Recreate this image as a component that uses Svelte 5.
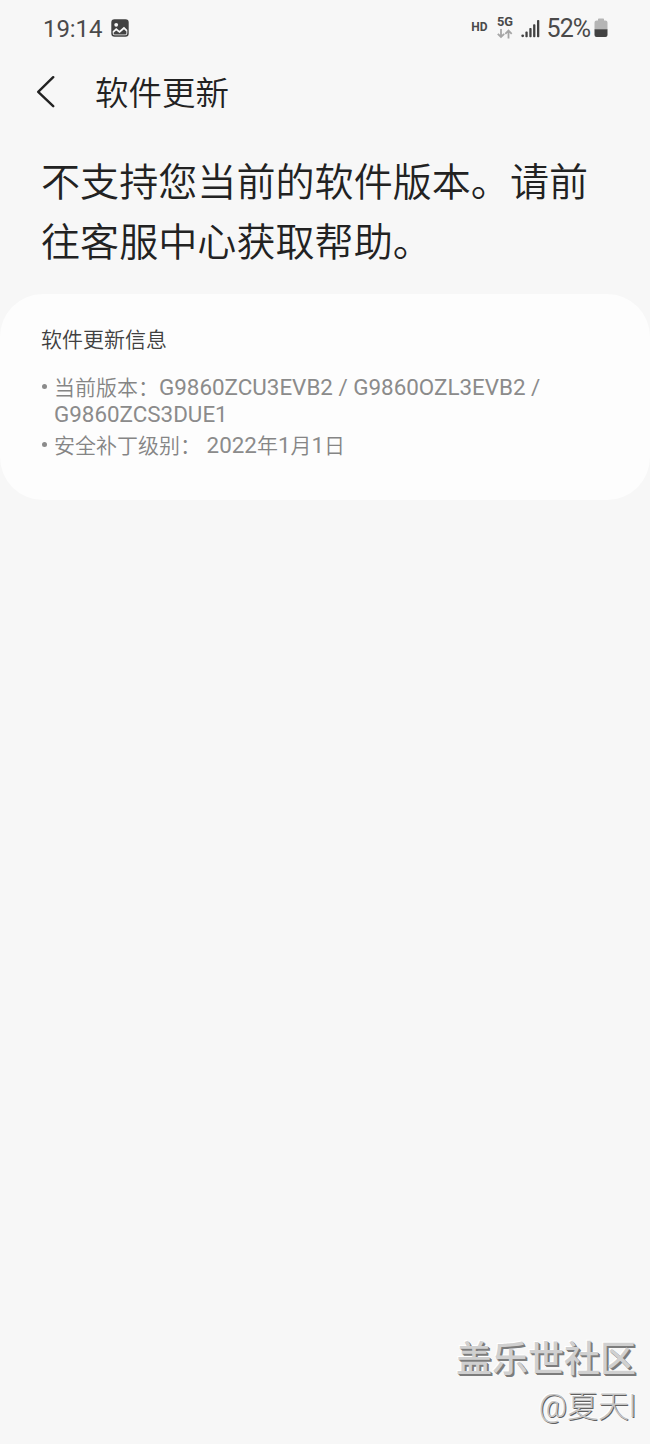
<script>
  const details = [
    { label: '当前版本：', lines: ['G9860ZCU3EVB2 / G9860OZL3EVB2 /', 'G9860ZCS3DUE1'] },
    { label: '安全补丁级别：', lines: ['\u00a02022年1月1日'] }
  ];
  const parts = (line) => line.split(/([年月日])/).filter(Boolean);
</script>

<div class="screen">
  <header class="status">
    <div class="left">
      <span class="clock">19:14</span>
      <svg class="photo" width="18" height="18" viewBox="0 0 18 18">
        <rect x=".3" y=".3" width="17.4" height="17.4" rx="3.2" fill="#424242" />
        <circle cx="5.2" cy="5.8" r="1.9" fill="#f7f7f7" />
        <path d="M1.7 12.2L5.2 9L8.4 11.8L13 7.8L16.3 11V14.2Q16.3 16.2 14.3 16.2H3.7Q1.7 16.2 1.7 14.2Z" fill="#f7f7f7" />
        <path d="M2.6 13.8L5.2 11.6L8.6 14L13 10.2L15.4 12.4V14.2Q15.4 15.4 14.2 15.4H3.8Q2.6 15.4 2.6 14.2Z" fill="#424242" />
      </svg>
    </div>
    <div class="right">
      <span class="hd">HD</span>
      <div class="network">
        <span>5G</span>
        <svg width="16" height="10" viewBox="0 0 16 10" fill="none" stroke="#a6a6a6" stroke-width="1.8">
          <path d="M4 0V8M.8 4.8L4 8L7.2 4.8M11.5 9.5V1.5M8.3 4.8L11.5 1.6L14.7 4.8" />
        </svg>
      </div>
      <svg class="signal" width="19" height="19" viewBox="0 0 19 19" fill="#424242">
        <circle cx="1.7" cy="16.8" r="1.4" />
        <rect x="4.4" y="12.6" width="2.3" height="5.6" rx=".8" />
        <rect x="8.3" y="9" width="2.3" height="9.2" rx=".8" />
        <rect x="12.1" y="5.2" width="2.3" height="13" rx=".8" />
        <rect x="16" y="1" width="2.3" height="17.2" rx=".8" />
      </svg>
      <span class="percent">52%</span>
      <svg class="battery" width="14" height="20" viewBox="0 0 14 20">
        <path d="M4 1.2Q4 .5 4.8 .5H9.2Q10 .5 10 1.2V2.5H11.5Q13.5 2.5 13.5 4.5V11.5H.5V4.5Q.5 2.5 2.5 2.5H4Z" fill="#b5b5b5" />
        <path d="M.5 11.2H13.5V17Q13.5 19 11.5 19H2.5Q.5 19 .5 17Z" fill="#424242" />
      </svg>
    </div>
  </header>

  <nav>
    <svg width="20" height="34" viewBox="0 0 20 34" fill="none" stroke="#222" stroke-width="2.4" stroke-linecap="round" stroke-linejoin="round">
      <path d="M17.2 1.2L2.2 15.8L17.2 30.2" />
    </svg>
    <h1>软件更新</h1>
  </nav>

  <p class="message">不支持您当前的软件版本。请前<br />往客服中心获取帮助。</p>

  <section>
    <h2>软件更新信息</h2>
    <ul>
      {#each details as item}
        <li>
          <i></i>
          <div>
            {#each item.lines as line, n}
              <p>{#if n === 0}<span class="cjk">{item.label}</span>{/if}{#each parts(line) as part}<span class:cjk={/[年月日]/.test(part)}>{part}</span>{/each}</p>
            {/each}
          </div>
        </li>
      {/each}
    </ul>
  </section>

  <footer>
    <div class="community">盖乐世社区</div>
    <div class="author">@夏天l</div>
  </footer>
</div>

<style>
  :global(body) { background: #f7f7f7; }
  .screen {
    box-sizing: border-box;
    width: 650px;
    height: 1444px;
    display: flex;
    flex-direction: column;
    overflow: hidden;
    background: #f7f7f7;
    color: #222;
    font-family: Roboto, "Noto Sans CJK SC", sans-serif;
    font-weight: 400;
  }
  .status {
    height: 56px;
    box-sizing: border-box;
    padding: 0 42px 0 43px;
    display: flex;
    justify-content: space-between;
    align-items: center;
    color: #4a4a4a;
  }
  .left, .right { display: flex; align-items: center; }
  .clock { font-size: 24px; line-height: 28px; padding-top: 1px; letter-spacing: -.1px; }
  .photo { margin-left: 9px; }
  .hd { font-size: 12px; font-weight: 700; line-height: 14px; margin: -2px 9px 0 0; }
  .network { display: flex; flex-direction: column; align-items: center; width: 17px; margin-right: 7px; font-size: 12.8px; font-weight: 700; line-height: 12px; margin-top: -2px; }
  .network svg { margin-top: 1px; }
  .percent { font-size: 25px; line-height: 28px; padding-top: 1px; letter-spacing: -1px; margin-left: 7px; }
  .battery { margin-left: 4px; }
  nav { height: 74px; padding-left: 36px; display: flex; align-items: center; }
  h1 { margin: 2px 0 0 39px; font-size: 33.5px; line-height: 48px; font-weight: 350; }
  .message { margin: 23px 0 0 41px; font-size: 39.1px; line-height: 60px; white-space: nowrap; font-weight: 350; }
  section {
    box-sizing: border-box;
    height: 206px;
    margin-top: 21px;
    padding: 31px 41px;
    border-radius: 43px;
    background: #fdfdfd;
  }
  h2 { margin: 0; font-size: 21px; line-height: 30px; font-weight: 350; color: #404040; }
  ul { list-style: none; margin: 19px 0 0; padding: 0; color: #8b8b8b; font-size: 22.4px; line-height: 27px; }
  li { display: flex; margin-bottom: 4px; white-space: nowrap; }
  li p { margin: 0; height: 27px; }
  li i { width: 5px; height: 5px; border-radius: 50%; background: #8b8b8b; margin: 10px 7px 0 1px; }
  .cjk { font-size: 21px; font-weight: 350; color: #858585; }
  footer { margin: auto 14px 15px 0; display: flex; flex-direction: column; align-items: flex-end; }
  .community {
    font-size: 36px;
    line-height: 44px;
    font-weight: 500;
    color: #d0d0d0;
    text-shadow: 1px 1px 0 #7c7c7c, 2px 2px 0 #7c7c7c, -1px -1px 0 #fff;
  }
  .author {
    margin-top: 3px;
    font-size: 31px;
    line-height: 44px;
    color: #c4c4c4;
    font-weight: 300;
    text-shadow: 1px 1px 0 #606060, -1px -1px 0 #fff;
  }
</style>
